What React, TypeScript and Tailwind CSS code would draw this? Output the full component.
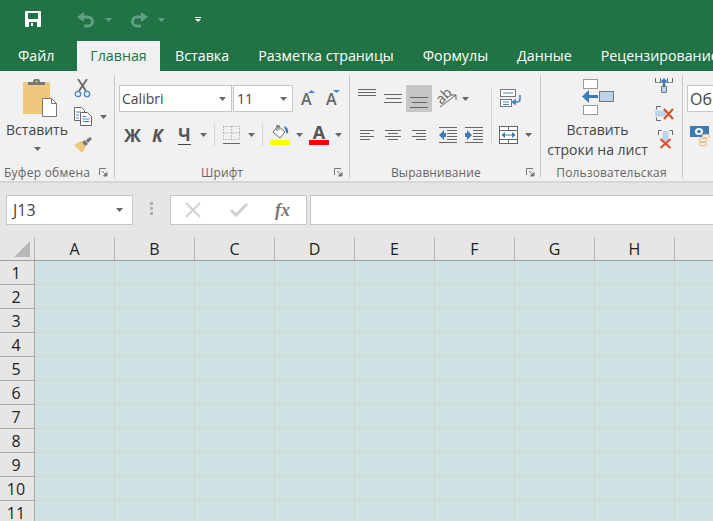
import { ReactNode } from "react"

const font = "font-['Open_Sans','Noto_Sans',sans-serif]"
const columns = ["A", "B", "C", "D", "E", "F", "G", "H"]
const rows = [1, 2, 3, 4, 5, 6, 7, 8, 9, 10, 11]
const tabs = ["Вставка", "Разметка страницы", "Формулы", "Данные", "Рецензирование"]

function Caret({ className = "", fill = "#666" }: { className?: string; fill?: string }) {
  return (
    <svg width="7" height="4" viewBox="0 0 7 4" className={`shrink-0 ${className}`}>
      <path d="M0 0h7L3.500 4z" fill={fill} />
    </svg>
  )
}

function Launcher() {
  return (
    <svg width="9" height="9" viewBox="0 0 9 9" className="shrink-0">
      <path d="M.5 7V.5H7" fill="none" stroke="#777" />
      <path d="M3 3l4 4M8 4.500V8H4.500z" fill="#777" stroke="#777" />
    </svg>
  )
}

function Lines({ widths, align, gap = "gap-[2px]" }: { widths: number[]; align: string; gap?: string }) {
  return (
    <div className={`flex w-fit flex-col ${gap} ${align}`}>
      {widths.map((w, i) => (
        <div key={i} className="h-[1px] bg-[#666]" style={{ width: w }} />
      ))}
    </div>
  )
}

function Sep({ h = "h-[22px]", x = "mx-[5px]" }: { h?: string; x?: string }) {
  return <div className={`w-[1px] shrink-0 bg-[#d2d2d2] ${h} ${x}`} />
}

function Group({ width, label, children, labelPad, launcher = true }: { width: string; label: string; children: ReactNode; labelPad: string; launcher?: boolean }) {
  return (
    <div className={`flex h-[103px] shrink-0 flex-col border-r border-[#c8c8c8] ${width}`}>
      <div className="h-[88px] shrink-0">{children}</div>
      <div className={`flex h-[15px] items-center justify-between pt-[4px] text-[12px] leading-none text-[#666] ${labelPad}`}>
        <span>{label}</span>
        {launcher && <Launcher />}
      </div>
    </div>
  )
}

function SaveIcon() {
  return (
    <svg width="16" height="16" viewBox="0 0 16 16">
      <path d="M0 1a1 1 0 011-1h14a1 1 0 011 1v14a1 1 0 01-1 1H1a1 1 0 01-1-1z" fill="#fff" />
      <rect x="3" y="2" width="10" height="6" fill="#217346" />
      <rect x="4" y="11" width="8" height="5" fill="#217346" />
      <rect x="6" y="12" width="2" height="3" fill="#fff" />
    </svg>
  )
}

function UndoIcon({ flip = false }: { flip?: boolean }) {
  return (
    <svg width="18" height="16" viewBox="0 0 18 16" className={flip ? "-scale-x-100" : ""}>
      <path d="M3 5h8a4.500 4.500 0 010 9H7" fill="none" stroke="#5fa083" strokeWidth="3" />
      <path d="M7 0v10L0 5z" fill="#5fa083" />
    </svg>
  )
}

function PasteIcon() {
  return (
    <svg width="35" height="38" viewBox="0 0 35 38">
      <rect x="0" y="3" width="27" height="32" rx="1" fill="#edc87e" />
      <path d="M5 6V3h5a3.500 3.500 0 017 0h5v3z" fill="#777" />
      <circle cx="13.500" cy="2.500" r="1" fill="#edc87e" />
      <path d="M19.500 19.500h9l5 5v13h-14z" fill="#fff" stroke="#777" />
      <path d="M28.500 19.500v5h5" fill="none" stroke="#777" />
    </svg>
  )
}

function ScissorsIcon() {
  return (
    <svg width="17" height="19" viewBox="0 0 17 19">
      <path d="M4 0l8 12M13 0L5 12" stroke="#666" strokeWidth="1.800" fill="none" />
      <circle cx="4" cy="15" r="2.700" fill="none" stroke="#4a86c5" strokeWidth="1.300" />
      <circle cx="13" cy="15" r="2.700" fill="none" stroke="#4a86c5" strokeWidth="1.300" />
    </svg>
  )
}

function CopyIcon() {
  return (
    <svg width="18" height="19" viewBox="0 0 18 19">
      <path d="M.5.500h7l3 3v10H.5z" fill="#fff" stroke="#666" />
      <path d="M6.500 5.500h7l4 4v9h-11z" fill="#fff" stroke="#666" />
      <path d="M2 5h5M2 8h3M2 11h3M8.500 9.500h4M8.500 12h7M8.500 14.500h7" stroke="#4a86c5" />
    </svg>
  )
}

function BrushIcon() {
  return (
    <svg width="18" height="16" viewBox="0 0 18 16">
      <path d="M0 8l7-4 5 6-4 6z" fill="#edc87e" />
      <path d="M8 5l3-2 3 4-3 2z" fill="#777" />
      <path d="M12 3l4-3 2 2-4 4z" fill="#777" />
    </svg>
  )
}

function FontSizeIcon({ up }: { up: boolean }) {
  return (
    <div className="relative flex h-[27px] w-[14px] items-center text-[16px] font-semibold leading-none text-[#666]">
      A
      <svg width="7" height="3" viewBox="0 0 7 3" className="absolute right-0 top-[5px]">
        <path d={up ? "M0 3h7L3.500 0z" : "M0 0h7L3.500 3z"} fill="#4a86c5" />
      </svg>
    </div>
  )
}

function BordersIcon() {
  return (
    <svg width="17" height="18" viewBox="0 0 17 18">
      <path d="M.5.500h16v13H.5zM8.500.500v13M.5 7h16" fill="none" stroke="#888" strokeDasharray="1 2" />
      <path d="M0 17.500h17" stroke="#666" />
    </svg>
  )
}

function FillIcon() {
  return (
    <div className="flex w-[20px] flex-col items-center">
      <svg width="18" height="15" viewBox="0 0 18 15">
        <path d="M7 1l7 6-5 6-7-6z" fill="#fff" stroke="#666" />
        <path d="M6 6V0h2v5" fill="none" stroke="#666" />
        <path d="M13 1c3 1 5 4 4 7-1 1-2 0-2-1z" fill="#3d7ab8" />
      </svg>
      <div className="h-[5px] w-[20px] bg-[#ffff00]" />
    </div>
  )
}

function FontColorIcon() {
  return (
    <div className="flex w-[20px] flex-col items-center">
      <span className="h-[15px] text-[18px] font-bold leading-[15px] text-[#555]">A</span>
      <div className="h-[5px] w-[20px] bg-[#ff0000]" />
    </div>
  )
}

function OrientationIcon() {
  return (
    <svg width="21" height="19" viewBox="0 0 21 19" className="overflow-visible">
      <text x="8" y="11" textAnchor="middle" transform="rotate(-45 8 8)" fontSize="14" fontFamily="Open Sans" fill="#666">ab</text>
      <path d="M3 18L19 6M19 6h-5M19 6v5" fill="none" stroke="#666" />
    </svg>
  )
}

function WrapIcon() {
  return (
    <svg width="22" height="18" viewBox="0 0 22 18">
      <rect x=".5" y=".5" width="15" height="7" fill="#fff" stroke="#777" />
      <rect x=".5" y="10.500" width="11" height="7" fill="#fff" stroke="#777" />
      <path d="M3 4h10M3 13h6M3 15.500h6" stroke="#4a86c5" />
      <path d="M20 6v4a3 3 0 01-3 3h-3" fill="none" stroke="#4a86c5" strokeWidth="1.600" />
      <path d="M16 9.500v7L11 13z" fill="#4a86c5" />
    </svg>
  )
}

function IndentIcon({ flip = false }: { flip?: boolean }) {
  return (
    <svg width="18" height="16" viewBox="0 0 18 16">
      <path d="M0 .500h18M0 15.500h18M8 3.500h10M8 6.500h10M8 9.500h10M8 12.500h10" stroke="#666" />
      {flip ? (
        <path d="M7 8L2 3v3H0v4h2v3z" fill="#3d7ab8" />
      ) : (
        <path d="M0 8l5-5v3h2v4H5v3z" fill="#3d7ab8" />
      )}
    </svg>
  )
}

function MergeIcon() {
  return (
    <svg width="19" height="18" viewBox="0 0 19 18">
      <rect x=".5" y=".5" width="18" height="17" fill="#fff" stroke="#666" />
      <path d="M0 4.500h19M0 13.500h19M9.500 0v4.500M9.500 13.500V18" stroke="#666" />
      <path d="M3 9h13" stroke="#3d7ab8" />
      <path d="M6 6v6L2.500 9zM13 6v6l3.500-3z" fill="#3d7ab8" />
    </svg>
  )
}

function InsertRowsIcon() {
  return (
    <svg width="32" height="36" viewBox="0 0 32 36">
      <rect x="1.500" y=".5" width="14" height="9" fill="#fff" stroke="#999" />
      <rect x="1.500" y="26.500" width="14" height="9" fill="#fff" stroke="#999" />
      <rect x="17.500" y="12.500" width="14" height="10" fill="#bcd3ea" stroke="#777" />
      <path d="M6 17.500h10" stroke="#3d7ab8" strokeWidth="3" />
      <path d="M7 11v13L0 17.500z" fill="#3d7ab8" />
    </svg>
  )
}

function InsertCellIcon() {
  return (
    <svg width="18" height="15" viewBox="0 0 18 15">
      <path d="M.5 0v4.500h2M5.500 0v4.500h-2M12.500 0v4.500h2M17.500 0v4.500h-2" fill="none" stroke="#666" />
      <path d="M9 2v6" stroke="#3d7ab8" strokeWidth="2.500" />
      <path d="M5 4.500L9 0l4 4.500z" fill="#3d7ab8" />
      <path d="M6.500 8.500h5v6h-5z" fill="#bcd3ea" stroke="#777" />
    </svg>
  )
}

function DeleteRowIcon() {
  return (
    <svg width="19" height="15" viewBox="0 0 19 15">
      <path d="M6 .5H1.500v3M6 14.500H1.500v-3" fill="none" stroke="#666" />
      <path d="M0 4.500h11v6H0z" fill="#bcd3ea" />
      <path d="M9 3l9 10M18 3L9 13" stroke="#d7532d" strokeWidth="2.200" />
    </svg>
  )
}

function DeleteColumnIcon() {
  return (
    <svg width="15" height="19" viewBox="0 0 15 19">
      <path d="M.5 5V.5h3M14.500 5V.5h-3" fill="none" stroke="#666" />
      <path d="M4.500 1h6v10h-6z" fill="#bcd3ea" />
      <path d="M2.500 9l10 9M12.500 9l-10 9" stroke="#d7532d" strokeWidth="2.200" />
    </svg>
  )
}

function MoneyIcon() {
  return (
    <svg width="21" height="21" viewBox="0 0 21 21">
      <rect x="0" y="0" width="19" height="11" fill="#3d7ab8" />
      <ellipse cx="9" cy="5.500" rx="4" ry="3.500" fill="#fff" />
      <circle cx="9" cy="5.500" r="1.800" fill="#3d7ab8" />
      <ellipse cx="16" cy="10" rx="4" ry="1.800" fill="#f1f1f1" stroke="#e5b97c" />
      <ellipse cx="13" cy="14" rx="4" ry="1.800" fill="#f1f1f1" stroke="#e5b97c" />
      <ellipse cx="13" cy="18" rx="4" ry="1.800" fill="#f1f1f1" stroke="#e5b97c" />
    </svg>
  )
}

export default function App() {
  return (
    <div className={`flex h-[521px] w-[713px] flex-col overflow-hidden bg-[#e6e6e6] ${font}`}>
      {/* Title bar */}
      <div className="h-[71px] shrink-0 bg-[#217346]">
        <div className="flex h-[41px] items-start pl-[25px] pt-[11px]">
          <SaveIcon />
          <div className="ml-[36px] mt-[1px] flex items-center">
            <UndoIcon />
            <Caret className="ml-[10px]" fill="#5fa083" />
          </div>
          <div className="ml-[18px] mt-[1px] flex items-center">
            <UndoIcon flip />
            <Caret className="ml-[10px]" fill="#5fa083" />
          </div>
          <div className="ml-[30px] mt-[6px] flex flex-col items-center gap-[1px]">
            <div className="h-[1px] w-[6px] bg-white" />
            <svg width="6" height="3" viewBox="0 0 6 3">
              <path d="M0 0h6L3 3z" fill="#fff" />
            </svg>
          </div>
        </div>
        <div className="flex h-[30px] items-center overflow-hidden whitespace-nowrap text-[14.25px] text-white">
          <span className="ml-[18px] w-[59px] shrink-0">Файл</span>
          <div className="flex h-[30px] w-[83px] shrink-0 items-center justify-center bg-[#f1f1f1] text-[#217346]">Главная</div>
          <div className="ml-[15px] flex shrink-0 gap-[29px]">
            {tabs.map((tab) => (
              <span key={tab}>{tab}</span>
            ))}
          </div>
        </div>
      </div>

      {/* Ribbon */}
      <div className="flex h-[112px] shrink-0 overflow-hidden border-b-2 border-[#d6d6d6] bg-[#f1f1f1] pt-[4px]">
        <Group width="w-[115px]" label="Буфер обмена" labelPad="pl-[4px] pr-[6px] tracking-[0.25px]">
          <div className="flex">
            <div className="flex w-[74px] flex-col items-center pt-[4px] text-[14px] leading-none text-[#444]">
              <div className="ml-[6px]">
                <PasteIcon />
              </div>
              <span className="mt-[6px]">Вставить</span>
              <Caret className="mt-[10px]" />
            </div>
            <div className="flex flex-col items-start pt-[4px]">
              <ScissorsIcon />
              <div className="mt-[9px] flex items-center">
                <CopyIcon />
                <Caret className="ml-[8px]" />
              </div>
              <div className="mt-[11px]">
                <BrushIcon />
              </div>
            </div>
          </div>
        </Group>

        <Group width="w-[235px]" label="Шрифт" labelPad="pl-[86px] pr-[6px] tracking-[0.1px]">
          <div className="flex flex-col pl-[4px] pt-[10px]">
            <div className="flex items-center gap-[1px]">
              <div className="flex h-[27px] w-[113px] items-center justify-between border border-[#c6c6c6] bg-white pl-[2px] pr-[5px] text-[14px] text-[#444]">
                Calibri
                <Caret />
              </div>
              <div className="flex h-[27px] w-[60px] items-center justify-between border border-[#c6c6c6] bg-white pl-[3px] pr-[5px] text-[14px] text-[#444]">
                11
                <Caret />
              </div>
              <div className="ml-[7px] flex gap-[11px]">
                <FontSizeIcon up />
                <FontSizeIcon up={false} />
              </div>
            </div>
            <div className="mt-[12px] flex h-[22px] items-center pl-[5px] text-[#555]">
              <span className="w-[28px] text-[18px] font-bold leading-none">Ж</span>
              <span className="w-[26px] text-[18px] font-bold italic leading-none">К</span>
              <span className="w-[13px] border-b border-[#444] text-center text-[17px] font-bold leading-[18px]">Ч</span>
              <Caret className="ml-[9px]" />
              <Sep x="ml-[7px] mr-[8px]" />
              <BordersIcon />
              <Caret className="ml-[8px]" />
              <Sep x="ml-[7px] mr-[7px]" />
              <FillIcon />
              <Caret className="ml-[6px]" />
              <div className="ml-[6px]">
                <FontColorIcon />
              </div>
              <Caret className="ml-[6px]" />
            </div>
          </div>
        </Group>

        <Group width="w-[191px]" label="Выравнивание" labelPad="pl-[41px] pr-[5px] tracking-[0.1px]">
          <div className="flex pl-[6px] pt-[10px]">
            <div className="w-[135px]">
              <div className="flex h-[27px]">
                <div className="w-[28px] pl-[2px] pt-[4px]"><Lines widths={[18, 18, 18]} align="items-start" /></div>
                <div className="flex w-[22px] items-center"><Lines widths={[18, 15, 18]} align="items-center" gap="gap-[3px]" /></div>
                <div className="flex w-[26px] items-end justify-center bg-[#c6c6c6] pb-[4px]"><Lines widths={[18, 15, 18]} align="items-center" gap="gap-[4px]" /></div>
                <div className="ml-[5px] flex items-center">
                  <OrientationIcon />
                  <Caret className="ml-[4px]" />
                </div>
              </div>
              <div className="mt-[15px] flex h-[16px] items-center">
                <div className="w-[29px] pl-[4px]"><Lines widths={[14, 10, 14, 10]} align="items-start" /></div>
                <div className="w-[27px]"><Lines widths={[16, 10, 16, 10]} align="items-center" /></div>
                <div className="w-[27px]"><Lines widths={[14, 10, 14, 10]} align="items-end" /></div>
                <IndentIcon />
                <div className="ml-[8px]"><IndentIcon flip /></div>
              </div>
            </div>
            <Sep h="h-[54px]" x="mt-[4px]" />
            <div className="ml-[8px] flex flex-col pt-[4px]">
              <WrapIcon />
              <div className="-ml-[1px] mt-[19px] flex items-center">
                <MergeIcon />
                <Caret className="ml-[7px]" />
              </div>
            </div>
          </div>
        </Group>

        <Group width="w-[142px]" label="Пользовательская" labelPad="justify-center tracking-[0.15px]" launcher={false}>
          <div className="flex">
            <div className="flex w-[113px] flex-col items-center pt-[4px] text-[14px] leading-[20px] text-[#444]">
              <InsertRowsIcon />
              <span className="mt-[5px]">Вставить</span>
              <span className="whitespace-nowrap">строки на лист</span>
            </div>
            <div className="flex flex-col pl-[1px] pt-[3px]">
              <InsertCellIcon />
              <div className="mt-[13px]"><DeleteRowIcon /></div>
              <div className="ml-[3px] mt-[9px]"><DeleteColumnIcon /></div>
            </div>
          </div>
        </Group>

        <div className="flex flex-col pl-[4px] pt-[10px]">
          <div className="flex h-[27px] w-[40px] items-center overflow-hidden whitespace-nowrap border border-r-0 border-[#c6c6c6] bg-white pl-[2px] text-[16px] text-[#444]">Общий</div>
          <div className="ml-[3px] mt-[14px]"><MoneyIcon /></div>
        </div>
      </div>

      {/* Formula bar */}
      <div className="flex h-[54px] shrink-0 items-start pt-[12px]">
        <div className="ml-[6px] flex h-[30px] w-[127px] items-center justify-between border border-[#c6c6c6] bg-white pl-[6px] pr-[9px] text-[16px] text-[#444]">
          J13
          <Caret />
        </div>
        <div className="ml-[17px] mt-[7px] flex flex-col gap-[2px]">
          <div className="h-[3px] w-[3px] bg-[#b0b0b0]" />
          <div className="h-[3px] w-[3px] bg-[#b0b0b0]" />
          <div className="h-[3px] w-[3px] bg-[#b0b0b0]" />
        </div>
        <div className="ml-[17px] flex h-[30px] w-[137px] items-center border border-[#c6c6c6] bg-white">
          <svg width="16" height="16" viewBox="0 0 16 16" className="ml-[14px]">
            <path d="M1 1l14 14M15 1L1 15" stroke="#cfcfcf" strokeWidth="1.800" />
          </svg>
          <svg width="18" height="14" viewBox="0 0 18 14" className="ml-[29px]">
            <path d="M1 7l5 5L17 1" fill="none" stroke="#cfcfcf" strokeWidth="3" />
          </svg>
          <span className="ml-[27px] font-['Liberation_Serif',serif] text-[18px] font-bold italic leading-none text-[#777]">fx</span>
        </div>
        <div className="ml-[3px] h-[30px] flex-1 border border-r-0 border-[#c6c6c6] bg-white" />
      </div>

      {/* Sheet */}
      <div className="flex-1 overflow-hidden">
        <div className="flex h-[24px] border-b border-[#9e9e9e]">
          <div className="flex h-[23px] w-[35px] shrink-0 items-end justify-end border-r border-[#b5b5b5] pb-[3px] pr-[4px]">
            <svg width="16" height="16" viewBox="0 0 16 16">
              <path d="M16 0v16H0z" fill="#b7b7b7" />
            </svg>
          </div>
          {columns.map((col) => (
            <div key={col} className="flex h-[23px] w-[80px] shrink-0 items-center justify-center border-r border-[#b5b5b5] text-[16px] text-[#222]">
              {col}
            </div>
          ))}
          <div className="flex-1" />
        </div>
        {rows.map((row) => (
          <div key={row} className="flex h-[24px] shrink-0">
            <div className="flex w-[35px] shrink-0 items-center justify-center border-b border-r border-[#a8a8a8] pr-[2px] text-[16px] text-[#222]">
              {row}
            </div>
            {columns.map((col) => (
              <div key={col} className="w-[80px] shrink-0 border-b border-r border-[#d4d4d4] bg-[#cee2e3]" />
            ))}
            <div className="flex-1 border-b border-[#d4d4d4] bg-[#cee2e3]" />
          </div>
        ))}
      </div>
    </div>
  )
}
